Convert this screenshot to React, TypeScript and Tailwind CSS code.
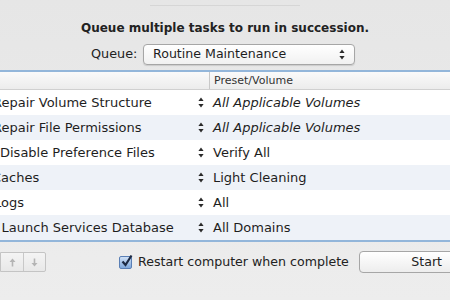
import React from "react";

const font = { fontFamily: '"DejaVu Sans", "Lucida Grande", sans-serif' };

function Stepper({ className = "" }: { className?: string }) {
  return (
    <svg width="6" height="11" viewBox="0 0 6 11" className={className}>
      <path d="M3 0.5 L5.6 4 L0.4 4 Z" fill="#2a2a2a" />
      <path d="M3 10.5 L5.6 7 L0.4 7 Z" fill="#2a2a2a" />
    </svg>
  );
}

const rows = [
  { name: "Repair Volume Structure", off: "-ml-[7px]", val: "All Applicable Volumes", italic: true },
  { name: "Repair File Permissions", off: "-ml-[7px]", val: "All Applicable Volumes", italic: true },
  { name: "Disable Preference Files", off: "ml-0", val: "Verify All", italic: false },
  { name: "Caches", off: "-ml-[8px]", val: "Light Cleaning", italic: false },
  { name: "Logs", off: "-ml-[6px]", val: "All", italic: false },
  { name: "Rebuild Launch Services Database", off: "-ml-[51px]", val: "All Domains", italic: false },
];

export default function App() {
  return (
    <div
      className="w-[450px] h-[300px] overflow-hidden bg-gradient-to-b from-[#e6e6e6] to-[#ededed] text-[#1e1e1e] flex flex-col"
      style={font}
    >
      <div className="h-[5px]" />
      <div className="h-px w-[150px] mx-auto bg-[#d6d6d6]" />
      <div className="mt-[15px] text-center font-bold text-[12px] leading-[14px] text-[#222]">
        Queue multiple tasks to run in succession.
      </div>
      <div className="mt-[8px] flex items-center h-[22px]">
        <div className="w-[91px] shrink-0" />
        <div className="text-[12.8px] text-[#222] w-[52px] shrink-0">Queue:</div>
        <div className="w-[212px] h-[21px] shrink-0 rounded-[4px] border border-[#a6a6a6] bg-gradient-to-b from-[#ffffff] to-[#f1f1f1] shadow-[0_1px_1px_rgba(0,0,0,0.12)] flex items-center px-[9px] text-[12.6px]">
          <span className="flex-1">Routine Maintenance</span>
          <Stepper />
        </div>
      </div>
      <div className="mt-[5px] h-[2px] bg-[#93b6da]" />
      <div className="h-[18px] bg-gradient-to-b from-[#fafafa] to-[#ececec] border-b border-[#d0d0d0] flex text-[11px] text-[#333]">
        <div className="w-[209px] shrink-0" />
        <div className="border-l border-[#c8c8c8] pl-[4px] leading-[17px]">Preset/Volume</div>
      </div>
      <div className="flex flex-col">
        {rows.map((r, i) => (
          <div
            key={i}
            className={`h-[25px] flex items-center text-[13px] ${i % 2 === 1 ? "bg-[#eef2f8]" : "bg-white"}`}
          >
            <div className="w-[198px] shrink-0 overflow-hidden whitespace-nowrap">
              <span className={`inline-block ${r.off}`}>{r.name}</span>
            </div>
            <div className="w-[15px] shrink-0 flex items-center">
              <Stepper />
            </div>
            <div className={r.italic ? "italic whitespace-nowrap" : "whitespace-nowrap"}>{r.val}</div>
          </div>
        ))}
      </div>
      <div className="h-[2px] bg-[#93b6da]" />
      <div className="mt-[9px] flex items-center h-[22px]">
        <div className="flex h-[20px] shrink-0 border border-[#c4c4c4] bg-gradient-to-b from-[#f4f4f4] to-[#e8e8e8] rounded-r-[2px]">
          <div className="w-[23px] flex items-center justify-center border-r border-[#c8c8c8]">
            <svg width="7" height="9" viewBox="0 0 7 9">
              <path d="M3.5 0.5 L6.5 4 L4.3 4 L4.3 8.5 L2.7 8.5 L2.7 4 L0.5 4 Z" fill="#b4b4b4" />
            </svg>
          </div>
          <div className="w-[21px] flex items-center justify-center">
            <svg width="7" height="9" viewBox="0 0 7 9">
              <path d="M3.5 8.5 L6.5 5 L4.3 5 L4.3 0.5 L2.7 0.5 L2.7 5 L0.5 5 Z" fill="#b4b4b4" />
            </svg>
          </div>
        </div>
        <div className="w-[73px] shrink-0" />
        <div className="w-[13px] h-[13px] shrink-0 rounded-[2px] border border-[#5a7fb5] bg-gradient-to-b from-[#cfe0f5] to-[#7fa8dc] relative">
          <svg width="14" height="14" viewBox="0 0 14 14" className="absolute -top-[3px] left-0">
            <path d="M2.5 7.5 L5.5 11 L11.5 1.5" stroke="#1c2a44" strokeWidth="2.2" fill="none" />
          </svg>
        </div>
        <div className="ml-[6px] text-[12.6px] text-[#222] w-[221px] shrink-0 whitespace-nowrap">Restart computer when complete</div>
        <div className="w-[100px] h-[22px] rounded-[4px] border border-[#a6a6a6] bg-gradient-to-b from-[#ffffff] to-[#ededed] shrink-0 flex items-center justify-end pr-[16px] text-[12.6px]">
          Start
        </div>
      </div>
    </div>
  );
}
